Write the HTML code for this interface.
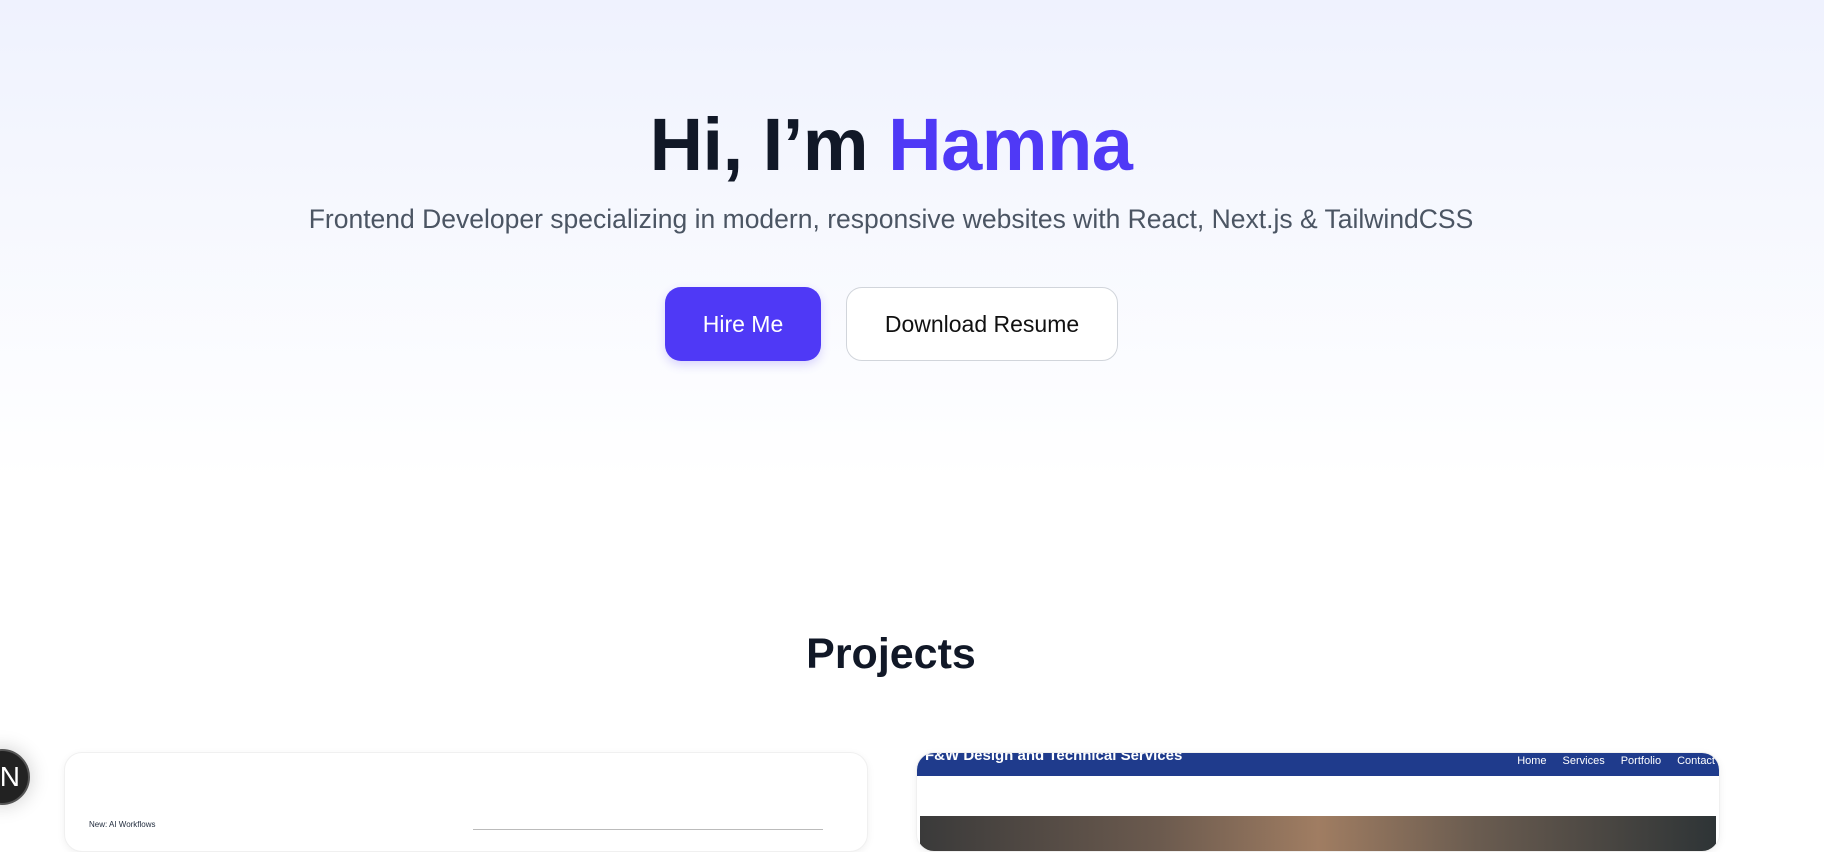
<!DOCTYPE html>
<html><head><meta charset="utf-8"><style>
*{margin:0;padding:0;box-sizing:border-box}
body{width:1824px;height:830px;overflow:hidden;font-family:"Liberation Sans",sans-serif;background:#fff;position:relative}
.hero{position:absolute;left:0;top:0;width:1824px;height:480px;background:linear-gradient(#eff2fe,#ffffff)}
h1{position:absolute;top:102px;left:0;width:1782px;text-align:center;font-size:74px;font-weight:bold;color:#111827;letter-spacing:-0.5px}
h1 span{color:#4f39f6}
.sub{position:absolute;top:204px;left:0;width:1782px;text-align:center;font-size:26.5px;color:#4b5563}
.btn{position:absolute;top:287px;height:74px;border-radius:16px;font-size:23px;display:flex;align-items:center;justify-content:center}
.b1{left:665px;width:156px;background:#4f39f6;color:#fff;box-shadow:0 4px 10px rgba(79,57,246,.2)}
.b2{left:846px;width:272px;background:#fff;border:1px solid #d1d5db;color:#111}
h2{position:absolute;top:630px;left:0;width:1782px;text-align:center;font-size:43px;font-weight:bold;color:#111827}
.card{position:absolute;top:752px;height:100px;border-radius:18px;background:#fff;box-shadow:0 2px 8px rgba(0,0,0,.06);border:1px solid #f0f0f0;overflow:hidden}
.c1{left:64px;width:804px}
.c2{left:916px;width:804px}
.bar{position:absolute;left:0;top:0;width:100%;height:23px;background:#1f3b8c;color:#fff;font-size:15px;font-weight:bold}
.nav{position:absolute;right:4px;top:2px;font-size:11px;font-weight:normal;word-spacing:0}
.nav span{margin-left:16px}
.img{position:absolute;left:3px;top:63px;width:796px;height:40px;background:linear-gradient(90deg,#3a3a3a,#6b5a4e 30%,#a07d62 50%,#6a5c50 70%,#2e3436)}
.badge{position:absolute;left:-26px;top:749px;width:56px;height:56px;border-radius:50%;background:#222;border:2px solid #555;color:#fff;font-size:28px;display:flex;align-items:center;justify-content:flex-end;padding-right:8px;box-shadow:0 0 20px rgba(0,0,0,.2)}
</style></head><body>
<div class="hero"></div>
<h1>Hi, I’m <span>Hamna</span></h1>
<div class="sub">Frontend Developer specializing in modern, responsive websites with React, Next.js &amp; TailwindCSS</div>
<div class="btn b1">Hire Me</div>
<div class="btn b2">Download Resume</div>
<h2>Projects</h2>
<div class="card c1">
<div style="position:absolute;left:24px;top:67px;font-size:8px;color:#1e293b">New: AI Workflows</div>
<div style="position:absolute;left:408px;top:76px;width:350px;height:1px;background:#bbb"></div>
</div>
<div class="card c2">
<div class="bar"><span style="position:absolute;left:8px;top:-6px">F&amp;W Design and Technical Services</span><div class="nav"><span>Home</span><span>Services</span><span>Portfolio</span><span>Contact</span></div></div>
<div class="img"></div>
</div>
<div class="badge">N</div>
</body></html>
